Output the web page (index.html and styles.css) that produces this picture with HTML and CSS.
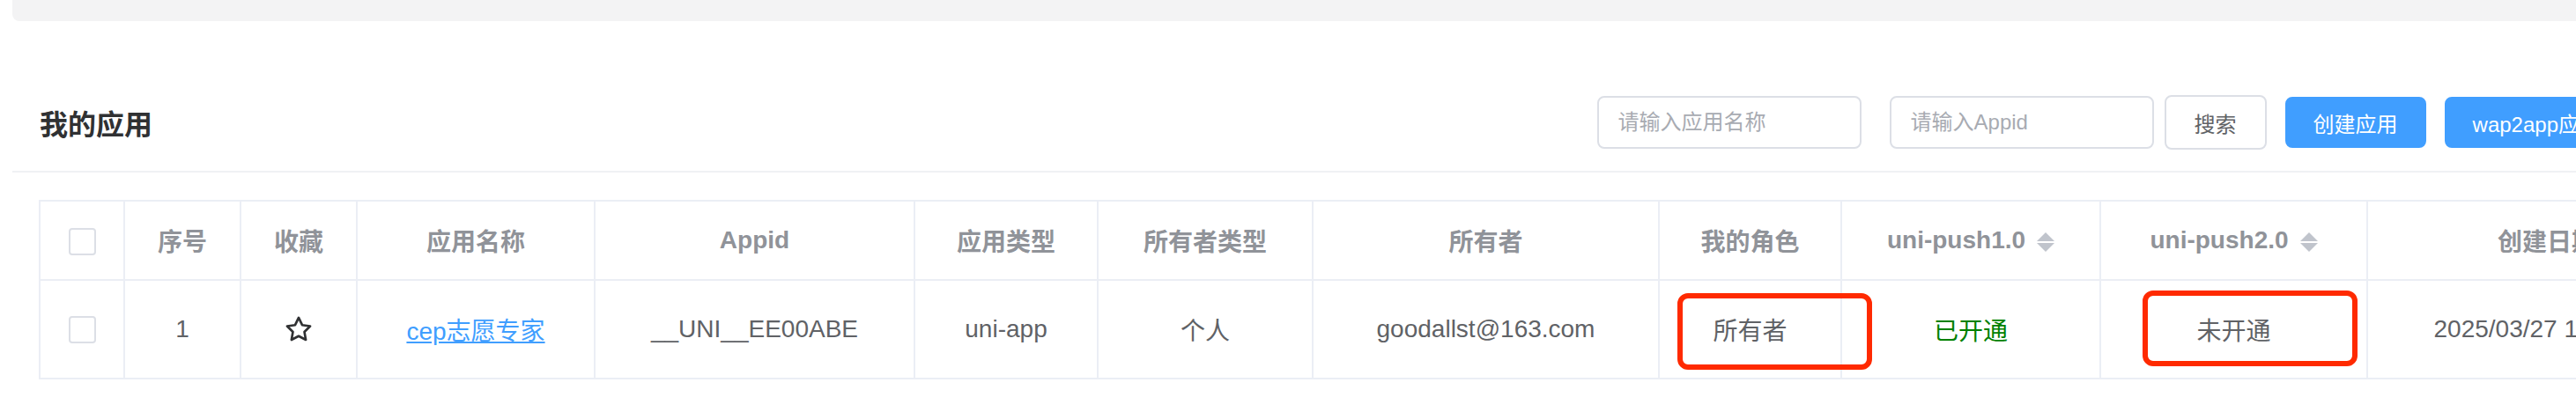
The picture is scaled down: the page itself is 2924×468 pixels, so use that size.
FILE: index.html
```html
<!DOCTYPE html>
<html lang="zh-CN">
<head>
  <meta charset="UTF-8">
  <meta name="viewport" content="width=device-width, initial-scale=1.0">
  <title>我的应用</title>
  <link rel="stylesheet" href="styles.css">
</head>
<body>
  <div class="page">
    <!-- bottom of the panel above -->
    <div class="top-panel"></div>

    <div class="app-card">
      <div class="card-header">
        <h2 class="card-title">我的应用</h2>
        <div class="toolbar">
          <input type="text" class="search-input" placeholder="请输入应用名称">
          <input type="text" class="search-input" placeholder="请输入Appid">
          <button class="btn">搜索</button>
          <button class="btn btn-primary">创建应用</button>
          <button class="btn btn-primary">wap2app应用</button>
        </div>
      </div>

      <div class="card-body">
        <table class="app-table">
          <colgroup>
            <col class="col-check">
            <col class="col-index">
            <col class="col-fav">
            <col class="col-name">
            <col class="col-appid">
            <col class="col-type">
            <col class="col-owner-type">
            <col class="col-owner">
            <col class="col-role">
            <col class="col-push1">
            <col class="col-push2">
            <col class="col-date">
          </colgroup>
          <thead>
            <tr>
              <th><span class="checkbox"></span></th>
              <th>序号</th>
              <th>收藏</th>
              <th>应用名称</th>
              <th>Appid</th>
              <th>应用类型</th>
              <th>所有者类型</th>
              <th>所有者</th>
              <th>我的角色</th>
              <th>uni-push1.0<span class="sort-caret"><i class="caret-up"></i><i class="caret-down"></i></span></th>
              <th>uni-push2.0<span class="sort-caret"><i class="caret-up"></i><i class="caret-down"></i></span></th>
              <th>创建日期</th>
            </tr>
          </thead>
          <tbody>
            <tr>
              <td><div class="cell"><span class="checkbox"></span></div></td>
              <td><div class="cell">1</div></td>
              <td>
                <div class="cell">
                  <svg class="star" viewBox="0 0 24 24" width="32" height="32">
                    <path d="M12 2.2l3 6.2 6.8 1-4.9 4.8 1.2 6.8L12 17.8 5.9 21l1.2-6.8L2.2 9.4l6.8-1z" fill="none" stroke="#303133" stroke-width="2" stroke-linejoin="round"/>
                  </svg>
                </div>
              </td>
              <td><div class="cell"><a href="#" class="app-link">cep志愿专家</a></div></td>
              <td><div class="cell">__UNI__EE00ABE</div></td>
              <td><div class="cell">uni-app</div></td>
              <td><div class="cell">个人</div></td>
              <td><div class="cell">goodallst@163.com</div></td>
              <td><div class="cell">所有者<span class="mark mark-role"></span></div></td>
              <td><div class="cell status-on">已开通</div></td>
              <td><div class="cell">未开通<span class="mark mark-push"></span></div></td>
              <td><div class="cell">2025/03/27 15:32:08</div></td>
            </tr>
          </tbody>
        </table>
      </div>
    </div>
  </div>
</body>
</html>
```

FILE: styles.css
```css
* {
  box-sizing: border-box;
}

body {
  margin: 0;
  font-family: "Liberation Sans", "Noto Sans CJK SC", sans-serif;
  background: #fff;
  overflow: hidden;
}

.page {
  padding-left: 14px;
}

.top-panel {
  height: 24px;
  background: #f3f3f4;
  border-bottom-left-radius: 8px;
}

.app-card {
  width: 3001px;
}

.card-header {
  display: flex;
  align-items: center;
  justify-content: space-between;
  padding: 84px 31px 24px;
  border-bottom: 2px solid #f0f1f4;
}

.card-title {
  margin: 0;
  font-size: 32px;
  font-weight: 600;
  color: #303133;
}

.toolbar {
  display: flex;
  align-items: center;
}

.search-input {
  width: 300px;
  height: 60px;
  padding: 0 22px;
  border: 2px solid #dcdfe6;
  border-radius: 8px;
  font-family: inherit;
  font-size: 24px;
  color: #606266;
  outline: none;
}

.search-input::placeholder {
  color: #a8abb2;
}

.search-input + .search-input {
  margin-left: 32px;
}

.btn {
  height: 62px;
  margin-left: 12px;
  padding: 0 32px;
  border: 2px solid #dcdfe6;
  border-radius: 8px;
  background: #fff;
  color: #606266;
  font-family: inherit;
  font-size: 24px;
  cursor: pointer;
}

.btn-primary {
  height: 58px;
  margin-left: 21px;
  padding: 0 30px;
  background: #409eff;
  border-color: #409eff;
  color: #fff;
}

.card-body {
  padding: 31px 0 0 30px;
}

.app-table {
  width: 3050px;
  table-layout: fixed;
  border-collapse: collapse;
}

.col-check { width: 96px; }
.col-index { width: 132px; }
.col-fav { width: 132px; }
.col-name { width: 270px; }
.col-appid { width: 363px; }
.col-type { width: 208px; }
.col-owner-type { width: 244px; }
.col-owner { width: 393px; }
.col-role { width: 207px; }
.col-push1 { width: 294px; }
.col-push2 { width: 303px; }
.col-date { width: 408px; }

.app-table th,
.app-table td {
  padding: 0;
  border: 2px solid #ebeef5;
  text-align: center;
  font-size: 28px;
  white-space: nowrap;
}

.app-table th {
  height: 90px;
  color: #909399;
  font-weight: 700;
}

.app-table td {
  color: #606266;
}

.cell {
  position: relative;
  display: flex;
  align-items: center;
  justify-content: center;
  height: 110px;
}

.checkbox {
  display: inline-block;
  width: 31px;
  height: 31px;
  border: 2px solid #dcdfe6;
  border-radius: 4px;
  background: #fff;
  vertical-align: middle;
}

.star {
  display: block;
}

.app-link {
  color: #409eff;
  text-decoration: underline;
}

.status-on {
  color: #008000;
}

.sort-caret {
  display: inline-flex;
  flex-direction: column;
  gap: 2px;
  margin-left: 13px;
  vertical-align: middle;
}

.caret-up,
.caret-down {
  width: 0;
  height: 0;
  border-left: 10px solid transparent;
  border-right: 10px solid transparent;
}

.caret-up {
  border-bottom: 10px solid #c0c4cc;
}

.caret-down {
  border-top: 10px solid #c0c4cc;
}

/* red highlight boxes */
.mark {
  position: absolute;
  border: 6px solid #ff2a00;
  border-radius: 12px;
  z-index: 1;
}

.mark-role {
  left: 20px;
  top: 14px;
  width: 221px;
  height: 87px;
}

.mark-push {
  left: 47px;
  top: 11px;
  width: 244px;
  height: 86px;
}
```
